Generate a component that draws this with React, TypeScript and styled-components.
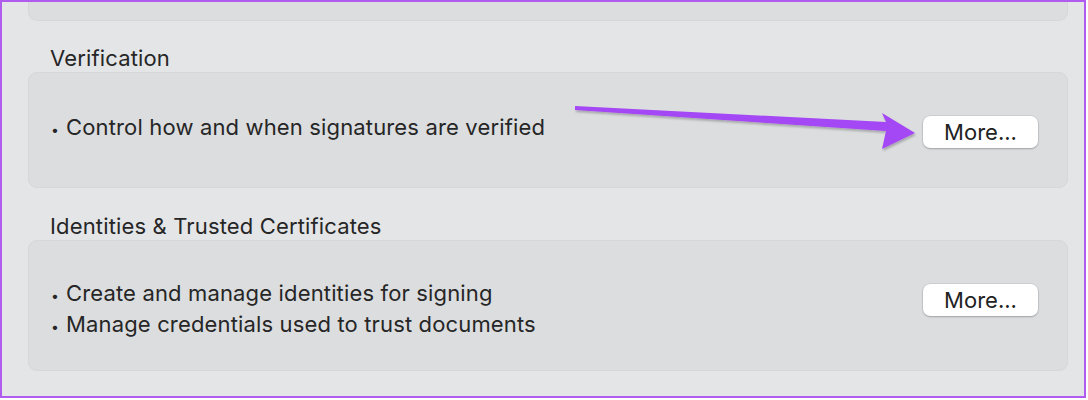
import * as React from 'react'
import styled, { createGlobalStyle } from 'styled-components'

const GlobalStyle = createGlobalStyle`
  body {
    margin: 0;
    background: #ffffff;
    font-family: Inter, "Noto Sans", sans-serif;
  }
`

const Frame = styled.div`
  position: relative;
  box-sizing: border-box;
  width: 1086px;
  height: 398px;
  border: 2px solid #b05cef;
  background: #e4e5e7;
  overflow: hidden;
  padding: 0 16px 0 26px;
  display: flex;
  flex-direction: column;
`

const Card = styled.div<{ $height: number }>`
  box-sizing: border-box;
  height: ${(p) => p.$height}px;
  background: #dcdddf;
  border: 1px solid #d6d7d9;
  border-radius: 9px;
  display: flex;
  align-items: center;
  justify-content: space-between;
  padding: 0 29px 0 22px;
`

const Stub = styled(Card)`
  border-top: none;
  border-radius: 0 0 9px 9px;
`

const SectionTitle = styled.div<{ $top: number }>`
  margin-top: ${(p) => p.$top}px;
  height: 28px;
  line-height: 28px;
  padding-left: 22px;
  font-size: 22px;
  letter-spacing: 0.15px;
  color: #262626;
`

// $shift moves the block up (negative) or down (positive) from the card's centre
const List = styled.ul<{ $shift: number }>`
  margin: ${(p) => (p.$shift > 0 ? `${p.$shift * 2}px 0 0` : `0 0 ${-p.$shift * 2}px`)};
  padding: 0;
  list-style: none;
  font-size: 22px;
  letter-spacing: 0.15px;
  line-height: 28px;
  color: #262626;
`

const Item = styled.li`
  &::before {
    content: '•';
    display: inline-block;
    width: 15px;
    font-size: 14px;
  }
`

const Button = styled.button<{ $shift: number }>`
  box-sizing: border-box;
  width: 115px;
  height: 32px;
  margin: ${(p) => (p.$shift > 0 ? `${p.$shift * 2}px 0 0` : `0 0 ${-p.$shift * 2}px`)};
  border: none;
  border-radius: 7px;
  background: #ffffff;
  box-shadow: 0 0 0 0.5px rgba(0, 0, 0, 0.12), 0 1px 2px rgba(0, 0, 0, 0.22);
  font-family: Inter, "Noto Sans", sans-serif;
  font-size: 22px;
  color: #222222;
  padding: 0;
`

const ArrowLayer = styled.svg`
  position: absolute;
  left: 0;
  top: 0;
  pointer-events: none;
`

function Arrow() {
  return (
    <ArrowLayer width="1086" height="398" viewBox="2 2 1086 398">
      <defs>
        <filter id="shade" x="-10%" y="-50%" width="120%" height="200%">
          <feDropShadow dx="1" dy="2" stdDeviation="1.2" floodColor="#000" floodOpacity="0.25" />
        </filter>
      </defs>
      <path
        d="M575 106 L886 122 L882 113 L915 133 L882 149 L886 131 L575 110 Z"
        fill="#a447f4"
        filter="url(#shade)"
      />
    </ArrowLayer>
  )
}

export default function App() {
  return (
    <>
      <GlobalStyle />
      <Frame>
        <Stub $height={19} />
        <SectionTitle $top={23}>Verification</SectionTitle>
        <Card $height={116}>
          <List $shift={-2}>
            <Item>Control how and when signatures are verified</Item>
          </List>
          <Button $shift={2}>More...</Button>
        </Card>
        <SectionTitle $top={24}>Identities &amp; Trusted Certificates</SectionTitle>
        <Card $height={131}>
          <List $shift={4.5}>
            <Item>Create and manage identities for signing</Item>
            <Item>Manage credentials used to trust documents</Item>
          </List>
          <Button $shift={-5.5}>More...</Button>
        </Card>
        <Arrow />
      </Frame>
    </>
  )
}
